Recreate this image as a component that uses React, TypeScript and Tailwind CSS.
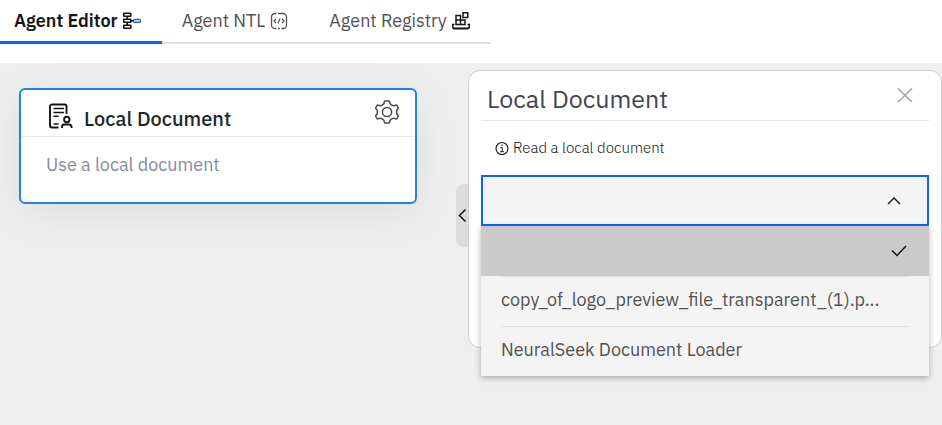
import { useState } from "react";

const documents = ["", "copy_of_logo_preview_file_transparent_(1).p...", "NeuralSeek Document Loader"];

function EditorIcon() {
  return (
    <svg width="20" height="18" viewBox="0 0 20 18" fill="none" stroke="#161616" strokeWidth="1.7" aria-hidden="true">
      <rect x="1.75" y="1.25" width="7" height="3" rx="0.5" />
      <rect x="1.75" y="7.25" width="7" height="3" rx="0.5" />
      <rect x="1.75" y="13.25" width="7" height="3" rx="0.5" />
      <path d="M5.25 4.500v2.500M5.25 10.500v2.500" />
      <path d="M9 8.800h2.500" />
      <rect x="11.500" y="7.300" width="7" height="3" rx="1" stroke="#2f56b5" fill="#c5d5ff" strokeWidth="1.200" />
    </svg>
  );
}

function NtlIcon() {
  return (
    <svg width="20" height="18" viewBox="-1 0 20 18" fill="none" stroke="#525252" strokeWidth="1.3" aria-hidden="true">
      <path d="M6.500 1.500H5A3.500 3.500 0 0 0 1.500 5v8A3.500 3.500 0 0 0 5 16.500h1.500M8 1.500h5A3.500 3.500 0 0 1 16.500 5v8a3.500 3.500 0 0 1-3.500 3.500h-1.500M8 16.500h2" />
      <path d="M6 7 4 9l2 2M12 7l2 2-2 2M10 6.500l-2 5" strokeWidth="1.200" />
    </svg>
  );
}

function RegistryIcon() {
  return (
    <svg width="20" height="20" viewBox="0 0 20 20" fill="none" stroke="#161616" strokeWidth="1.5" aria-hidden="true">
      <path d="M5 4.500h4.500v9H5zM5 9h9v4.500H5" />
      <rect x="12" y="1.750" width="4.750" height="4.750" />
      <path d="M3.500 13.500H1.750v2.500q0 1.750 1.750 1.750h13q1.750 0 1.750-1.750v-2.500H16.500" />
      <path d="M2 16.800h16" strokeWidth="0.800" />
    </svg>
  );
}

function DocumentUserIcon() {
  return (
    <svg width="26" height="28" viewBox="0 0 26 28" fill="none" stroke="#161616" strokeWidth="1.900" aria-hidden="true">
      <path d="M10.500 25.500H4a2 2 0 0 1-2-2v-19a2 2 0 0 1 2-2h12.500a2 2 0 0 1 2 2V12" />
      <path d="M5.500 6.500H16M5.500 10.500H16M5.500 14.200h5M5.500 22h5" strokeWidth="1.600" />
      <circle cx="18.800" cy="17.500" r="2.700" />
      <path d="M14 26v-1a2.500 2.500 0 0 1 2.500-2.500h4.600a2.500 2.500 0 0 1 2.500 2.500v1" />
    </svg>
  );
}

function GearIcon() {
  return (
    <svg width="26" height="26" viewBox="-13 -13 26 26" fill="none" stroke="#484848" strokeWidth="1.500" strokeLinejoin="round" aria-hidden="true">
      <path d="M-2-11h4q.4 0 .5.400l.6 2.200q.2.500.6.700l2.300 1.300q.5.300 1 .100l2.100-.6q.5-.1.800.3l1.300 2.300q.3.500-.1.900l-1.200 1.300q-.3.400-.3.900v2.400q0 .5.3.9l1.200 1.300q.4.400.1.900l-1.300 2.300q-.3.400-.8.300l-2.100-.6q-.5-.2-1 .1l-2.300 1.300q-.4.200-.6.700l-.6 2.200q-.1.400-.5.400h-4q-.4 0-.5-.4l-.6-2.200q-.2-.5-.6-.7l-2.300-1.300q-.5-.3-1-.1l-2.100.6q-.5.1-.8-.3l-1.300-2.300q-.3-.5.100-.9l1.200-1.300q.3-.4.3-.9v-2.400q0-.5-.3-.9l-1.200-1.300q-.4-.4-.1-.9l1.300-2.300q.3-.4.8-.3l2.100.6q.5.200 1-.1l2.300-1.300q.4-.2.6-.7l.6-2.200q.1-.4.500-.4z" />
      <circle r="4.600" />
    </svg>
  );
}

function InfoIcon() {
  return (
    <svg width="14" height="14" viewBox="0 0 14 14" fill="none" stroke="#161616" aria-hidden="true">
      <circle cx="7" cy="7.500" r="6" strokeWidth="1.100" />
      <path d="M5.500 6.500h1.700v4.200M5.200 10.700h3.700" />
      <circle cx="7" cy="4.300" r="0.700" fill="#161616" stroke="none" />
    </svg>
  );
}

const tabs = [
  { label: "Agent Editor", Icon: EditorIcon },
  { label: "Agent NTL", Icon: NtlIcon },
  { label: "Agent Registry", Icon: RegistryIcon },
];

export default function App() {
  const [tab, setTab] = useState(0);
  const [panelOpen, setPanelOpen] = useState(true);
  const [menuOpen, setMenuOpen] = useState(true);
  const [selected, setSelected] = useState(0);

  return (
    <div className="flex min-h-screen flex-col bg-white font-['IBM_Plex_Sans',Roboto,sans-serif]">
      <header className="h-[63px]">
        <div role="tablist" className="flex h-11">
          {tabs.map(({ label, Icon }, i) => (
            <button
              key={label}
              role="tab"
              aria-selected={tab === i}
              onClick={() => setTab(i)}
              className={
                "flex items-center gap-1 whitespace-nowrap text-lg " +
                (tab === i
                  ? "border-b-3 border-[#0f62fe] pl-3.5 pr-5 font-semibold text-[#161616]"
                  : "border-b-2 border-[#e0e0e0] px-5 text-[#525252]")
              }
            >
              {label}
              <Icon />
            </button>
          ))}
        </div>
      </header>

      <main className="flex flex-1 items-start bg-[#efefef]">
        <div className="min-w-0 flex-1 py-[25px] pl-[19px] pr-[39px]">
          <section className="h-[116px] rounded-md border-2 border-[#2680eb] bg-white shadow-[0_8px_40px_rgba(0,0,0,0.08)]">
            <div className="flex h-[47px] items-start justify-between border-b border-[#e5e5ea] pl-[27px] pr-[15px]">
              <h2 className="flex items-start gap-2.5 pt-3 text-xl font-medium text-[#21272a]">
                <DocumentUserIcon />
                <span className="pt-[3px]">Local Document</span>
              </h2>
              <button aria-label="Settings" className="pt-[9px]">
                <GearIcon />
              </button>
            </div>
            <p className="px-[25px] pt-3.5 text-lg text-[#878a9e]">Use a local document</p>
          </section>
        </div>

        <button
          aria-label="Toggle panel"
          onClick={() => setPanelOpen(!panelOpen)}
          className="mt-[121px] flex h-[63px] w-3 items-center justify-center rounded-l-lg bg-[#dcdcdc]"
        >
          <svg width="10" height="16" viewBox="0 0 10 16" fill="none" stroke="#161616" strokeWidth="1.500" aria-hidden="true">
            <path d="m8.500 1.500-6 6 6 6" />
          </svg>
        </button>

        {panelOpen && (
          <aside className="mt-[7px] h-[278px] w-[474px] shrink-0 rounded-xl border border-[#d0d0d0] bg-white px-3">
            <div className="flex h-[50px] items-center justify-between border-b border-[#e5e5ea] pl-1.5 pr-3.5">
              <h1 className="pt-1.5 text-[25px] leading-7 text-[#42454f]">Local Document</h1>
              <button aria-label="Close">
                <svg width="20" height="20" viewBox="0 0 20 20" fill="none" stroke="#a5a3b5" strokeWidth="1.700" aria-hidden="true">
                  <path d="m3 2.500 14 13.500M17 2.500 3 16" />
                </svg>
              </button>
            </div>
            <label htmlFor="document" className="flex h-[54px] items-center gap-1 pl-3.5 text-[15px] font-light text-[#161616]">
              <InfoIcon />
              Read a local document
            </label>
            <div className="relative">
              <div className="flex items-center border-2 border-[#0f62fe] bg-[#f4f4f4]">
                <select
                  id="document"
                  value={documents[selected]}
                  onChange={(e) => setSelected(documents.indexOf(e.target.value))}
                  onMouseDown={(e) => {
                    e.preventDefault();
                    setMenuOpen(!menuOpen);
                  }}
                  className="h-[47px] min-w-0 flex-1 appearance-none bg-transparent pl-[18px] text-lg text-[#525252] outline-none"
                >
                  {documents.map((d) => (
                    <option key={d} value={d}>{d}</option>
                  ))}
                </select>
                <svg className="mr-[25px]" width="16" height="16" viewBox="0 0 16 16" fill="none" stroke="#161616" strokeWidth="1.400" aria-hidden="true">
                  <path d="m2 11 6-6 6 6" />
                </svg>
              </div>
              {menuOpen && (
                <ul role="listbox" aria-label="Documents" className="absolute inset-x-0 top-full bg-[#f4f4f4] shadow-[0_2px_6px_rgba(0,0,0,0.3)]">
                  {documents.map((d, i) => (
                    <li
                      key={d}
                      role="option"
                      aria-selected={selected === i}
                      onClick={() => {
                        setSelected(i);
                        setMenuOpen(false);
                      }}
                      className={"h-[50px] px-5 " + (selected === i ? "bg-[#cacaca]" : "")}
                    >
                      <div
                        className={
                          "flex h-full items-center justify-between pb-1 text-lg text-[#525252] " +
                          (i > 0 ? "border-t border-[#e0e0e0]" : "")
                        }
                      >
                        <span className="whitespace-nowrap">{d}</span>
                        {selected === i && (
                          <svg width="20" height="16" viewBox="0 0 20 16" fill="none" stroke="#161616" strokeWidth="1.500" aria-hidden="true">
                            <path d="m3 9.500 5 5 9-9.500" />
                          </svg>
                        )}
                      </div>
                    </li>
                  ))}
                </ul>
              )}
            </div>
          </aside>
        )}
      </main>
    </div>
  );
}
